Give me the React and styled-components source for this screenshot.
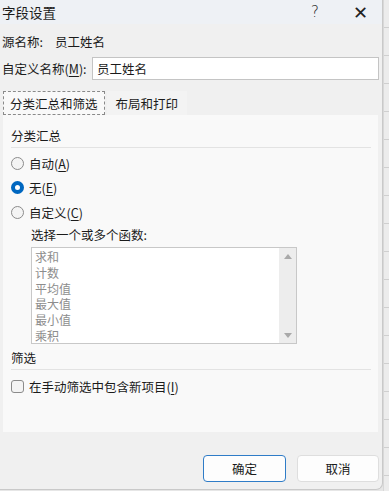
import styled, { createGlobalStyle } from "styled-components";

const GlobalStyle = createGlobalStyle`
  body {
    margin: 0;
    background: #e6e6e6;
    font-family: "Noto Sans CJK SC", "Noto Sans", sans-serif;
    color: #1b1b1b;
  }
`;

const Page = styled.div`
  display: flex;
  width: 389px;
  height: 491px;
  overflow: hidden;
`;

const Dialog = styled.div`
  width: 382px;
  height: 489px;
  background: #f0f0f0;
  border-right: 1px solid #c9c9c9;
  border-bottom: 1px solid #c9c9c9;
  border-bottom-right-radius: 7px;
  display: flex;
  flex-direction: column;
  font-size: 12.5px;
  white-space: nowrap;
`;

const Sheet = styled.div`
  flex: 1;
  background: repeating-linear-gradient(
    to bottom,
    #ececec 0,
    #ececec 27px,
    #cfcfcf 27px,
    #cfcfcf 28px
  );
  border-left: 1px solid #d8d8d8;
`;

const TitleBar = styled.div`
  height: 24px;
  background: #eef1f5;
  display: flex;
  align-items: center;
  padding-left: 2px;
  font-size: 13.5px;
`;

const Title = styled.span`
  flex: 1;
`;

const TitleBtn = styled.span`
  width: ${(p) => p.w}px;
  text-align: center;
  font-size: ${(p) => p.size}px;
  font-family: "DejaVu Sans", sans-serif;
  color: #222;
  font-weight: 300;
`;

const Body = styled.div`
  padding: 0 3px 0 2px;
  display: flex;
  flex-direction: column;
  flex: 1;
`;

const InfoRow = styled.div`
  display: flex;
  align-items: center;
  height: 22px;
  margin-top: ${(p) => p.mt}px;
  gap: ${(p) => p.gap || 0}px;
`;

const Label = styled.span`
  flex: none;
`;

const NameInput = styled.div`
  width: 281px;
  height: 21px;
  margin-left: auto;
  flex: none;
  background: #fff;
  border: 1px solid #c4c4c4;
  display: flex;
  align-items: center;
  padding-left: 4px;
  box-sizing: content-box;
`;

const U = styled.span`
  text-decoration: underline;
  text-underline-offset: 2px;
`;

const Tabs = styled.div`
  display: flex;
  margin-top: 12px;
  padding-left: 1px;
`;

const Tab = styled.div`
  height: 24px;
  padding: 0 ${(p) => p.px}px;
  display: flex;
  align-items: center;
  box-sizing: border-box;
  background: ${(p) => (p.active ? "#f9f9f9" : "#f3f3f3")};
  border: ${(p) => (p.active ? "1px dashed #8a8a8a" : "1px solid transparent")};
  margin-left: ${(p) => p.ml || 0}px;
`;

const Panel = styled.div`
  margin-left: 1px;
  width: 375px;
  height: 317px;
  background: #f9f9f9;
  padding: 11px 8px 0 8px;
  box-sizing: border-box;
`;

const GroupTitle = styled.div`
  height: 20px;
  line-height: 20px;
  margin-top: ${(p) => p.mt || 0}px;
`;

const Rule = styled.div`
  height: 1px;
  background: #e3e3e3;
  margin: 1px 0 0 0;
  width: 360px;
`;

const OptionRow = styled.div`
  display: flex;
  align-items: center;
  gap: 5px;
  height: 20px;
  margin-top: ${(p) => p.mt}px;
`;

const Radio = styled.span`
  width: 13px;
  height: 13px;
  border-radius: 50%;
  box-sizing: border-box;
  flex: none;
  ${(p) =>
    p.checked
      ? `background: #fff; border: 4px solid #0067c0;`
      : `background: #f4f4f4; border: 1px solid #8b8b8b;`}
`;

const Check = styled.span`
  width: 13px;
  height: 13px;
  border-radius: 3px;
  border: 1px solid #8b8b8b;
  background: #f4f4f4;
  box-sizing: border-box;
  flex: none;
`;

const SubLabel = styled.div`
  margin: 4px 0 0 20px;
  height: 18px;
  line-height: 18px;
`;

const ListBox = styled.div`
  margin: 3px 0 0 20px;
  width: 266px;
  height: 97px;
  box-sizing: border-box;
  border: 1px solid #c8c8c8;
  background: #fff;
  display: flex;
`;

const Items = styled.div`
  flex: 1;
  padding: 1px 0 0 3px;
  color: #8d8d8d;
  font-size: 12px;
`;

const Item = styled.div`
  height: 15.8px;
  line-height: 15.8px;
`;

const ScrollBar = styled.div`
  width: 17px;
  background: #ededed;
  display: flex;
  flex-direction: column;
  justify-content: space-between;
  align-items: center;
  padding: 6px 0 5px;
`;

const Arrow = styled.span`
  width: 0;
  height: 0;
  border-left: 4px solid transparent;
  border-right: 4px solid transparent;
  ${(p) =>
    p.up ? `border-bottom: 5px solid #a9a9a9;` : `border-top: 5px solid #a9a9a9;`}
`;

const Footer = styled.div`
  display: flex;
  justify-content: flex-end;
  gap: 11px;
  margin-top: 23px;
`;

const Button = styled.div`
  width: ${(p) => p.w}px;
  height: 27px;
  box-sizing: border-box;
  border-radius: 4px;
  background: #fdfdfd;
  border: 1px solid ${(p) => (p.primary ? "#2f7cc7" : "#dedede")};
  display: flex;
  align-items: center;
  justify-content: center;
`;

const functions = ["求和", "计数", "平均值", "最大值", "最小值", "乘积"];

export default function App() {
  return (
    <>
      <GlobalStyle />
      <Page>
        <Dialog>
          <TitleBar>
            <Title>字段设置</Title>
            <TitleBtn w={46} size={15}>?</TitleBtn>
            <TitleBtn w={44} size={18}>✕</TitleBtn>
          </TitleBar>
          <Body>
            <InfoRow mt={6} gap={12}>
              <Label>源名称:</Label>
              <span>员工姓名</span>
            </InfoRow>
            <InfoRow mt={5}>
              <Label>
                自定义名称(<U>M</U>):
              </Label>
              <NameInput>员工姓名</NameInput>
            </InfoRow>
            <Tabs>
              <Tab active px={6}>分类汇总和筛选</Tab>
              <Tab px={8} ml={2}>布局和打印</Tab>
            </Tabs>
            <Panel>
              <GroupTitle>分类汇总</GroupTitle>
              <Rule />
              <OptionRow mt={5}>
                <Radio />
                <span>
                  自动(<U>A</U>)
                </span>
              </OptionRow>
              <OptionRow mt={4}>
                <Radio checked />
                <span>
                  无(<U>E</U>)
                </span>
              </OptionRow>
              <OptionRow mt={5}>
                <Radio />
                <span>
                  自定义(<U>C</U>)
                </span>
              </OptionRow>
              <SubLabel>选择一个或多个函数:</SubLabel>
              <ListBox>
                <Items>
                  {functions.map((f) => (
                    <Item key={f}>{f}</Item>
                  ))}
                </Items>
                <ScrollBar>
                  <Arrow up />
                  <Arrow />
                </ScrollBar>
              </ListBox>
              <GroupTitle mt={4}>筛选</GroupTitle>
              <Rule />
              <OptionRow mt={6}>
                <Check />
                <span>
                  在手动筛选中包含新项目(<U>I</U>)
                </span>
              </OptionRow>
            </Panel>
            <Footer>
              <Button primary w={83}>确定</Button>
              <Button w={82}>取消</Button>
            </Footer>
          </Body>
        </Dialog>
        <Sheet />
      </Page>
    </>
  );
}
